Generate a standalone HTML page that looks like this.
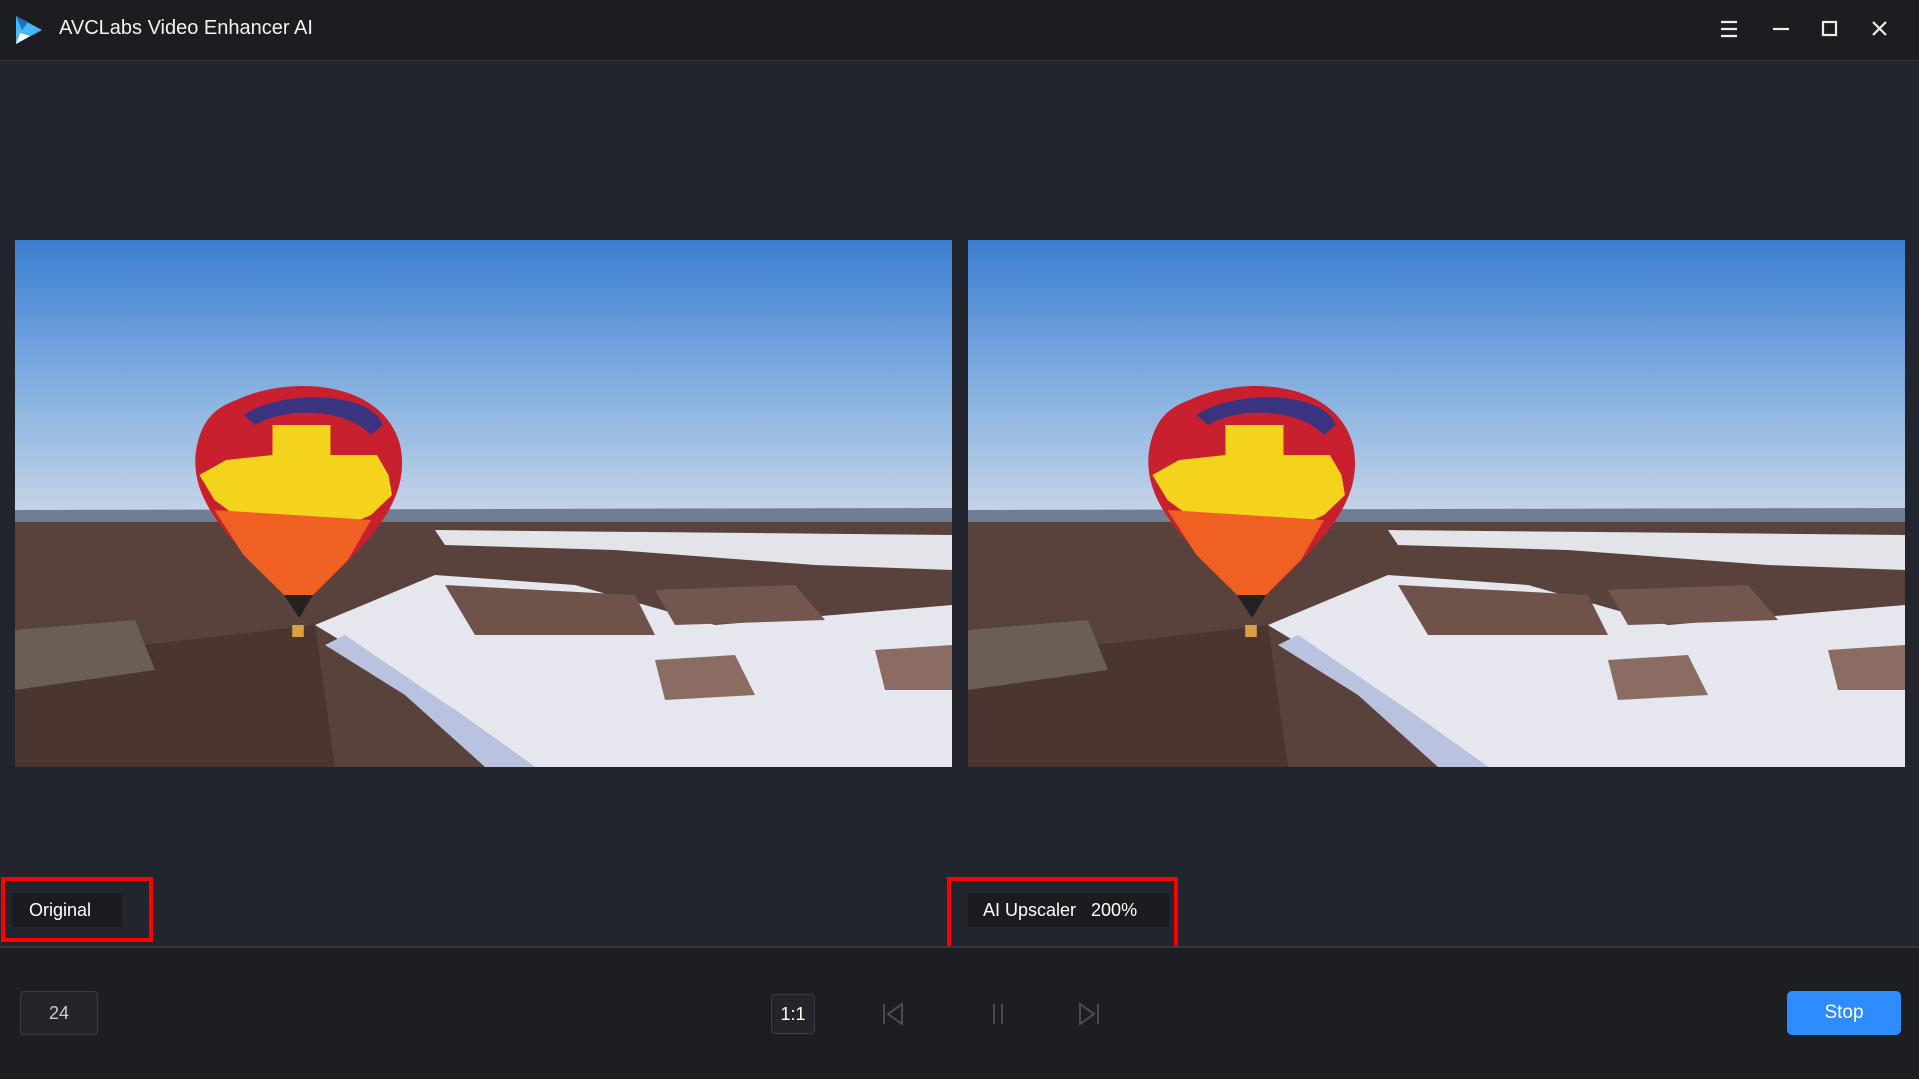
<!DOCTYPE html>
<html><head><meta charset="utf-8"><style>
*{margin:0;padding:0;box-sizing:border-box}
body{width:1919px;height:1079px;background:#22252d;font-family:"Liberation Sans",sans-serif;position:relative;overflow:hidden;color:#fff}
.title{position:absolute;left:0;top:0;width:1919px;height:61px;background:#1c1d20;border-bottom:1px solid #33363c}
.title span{position:absolute;left:59px;top:17px;font-size:20px;color:#f2f2f2}
.bottom{position:absolute;left:0;top:946px;width:1919px;height:133px;background:#1d1e22;border-top:2px solid #34373d}
.img{position:absolute;top:240px;width:937px;height:527px}
.lbl{position:absolute;top:893px;height:34px;background:#1b1c20;font-size:18px;line-height:34px;color:#fff}
.red{position:absolute;border:4px solid #f00}
.box{position:absolute;border:1px solid #3a3d44;border-radius:4px;background:#23252b;color:#ccc;font-size:18px;text-align:center;line-height:42px}
</style></head><body>
<div class="title">
<svg style="position:absolute;left:14px;top:14px" width="30" height="32" viewBox="0 0 30 32"><path d="M2 2 L28 16 L2 30 Z" fill="#45b8f5"/><path d="M2 2 L14 8 L8 16 Z" fill="#1f6fc4"/><path d="M2 30 L16 22 L6 19 Z" fill="#fff"/></svg>
<span>AVCLabs Video Enhancer AI</span>
<svg style="position:absolute;left:1718px;top:18px" width="180" height="22" viewBox="0 0 180 22" stroke="#eee" stroke-width="2.2" fill="none">
<path d="M3 4h16M3 11h16M3 18h16"/><path d="M55 11h16"/><rect x="105" y="4" width="13" height="13"/><path d="M155 4l13 13M168 4l-13 13"/></svg>
</div>
<svg class="img" style="left:15px" viewBox="0 0 937 527" preserveAspectRatio="none"><use href="#scene"/></svg>
<svg class="img" style="left:968px" viewBox="0 0 937 527" preserveAspectRatio="none">
<defs><g id="scene">
<linearGradient id="sky" x1="0" y1="0" x2="0" y2="1"><stop offset="0" stop-color="#3b7ed2"/><stop offset="0.6" stop-color="#8fb6e2"/><stop offset="1" stop-color="#c9d6e6"/></linearGradient>
<rect width="937" height="280" fill="url(#sky)"/>
<rect y="270" width="937" height="257" fill="#5a423c"/>
<path d="M0 270 L937 268 L937 282 L0 282Z" fill="#6f7d95"/>
<path d="M420 290 L937 295 L937 330 L800 325 L600 310 L430 305Z" fill="#e3e3ea"/>
<path d="M300 385 L420 335 L560 345 L700 385 L937 365 L937 527 L520 527 L440 470Z" fill="#e6e6ee"/>
<path d="M330 395 L440 470 L520 527 L470 527 L390 455 L310 405Z" fill="#b9c3e0"/>
<path d="M430 345 L620 355 L640 395 L460 395Z" fill="#6f534b"/>
<path d="M640 350 L780 345 L810 380 L660 385Z" fill="#73574f"/>
<path d="M640 420 L720 415 L740 455 L650 460Z" fill="#8a6c62"/>
<path d="M860 410 L937 405 L937 450 L870 450Z" fill="#8a6c62"/>
<path d="M0 420 L300 385 L320 527 L0 527Z" fill="#4a3530"/>
<path d="M0 390 L120 380 L140 430 L0 450Z" fill="#6a5e55"/>
<g transform="translate(283,0) scale(1.16,1) translate(-237,0)">
<path d="M184 160 C230 135 310 140 325 205 C335 260 300 300 250 355 L225 355 C180 300 140 260 150 205 C155 180 165 168 184 160Z" fill="#c8202f"/>
<path d="M190 175 C220 150 300 150 310 185 L300 195 C280 170 230 165 200 185Z" fill="#3a3480"/>
<path d="M215 185 L265 185 L265 215 L305 215 L315 235 L318 255 L300 275 L270 290 L200 290 L165 260 L152 235 L175 220 L215 215Z" fill="#f3d31c"/>
<path d="M165 270 L300 280 L280 320 L250 355 L225 355 L190 315Z" fill="#f06022"/>
<path d="M225 355 L250 355 L238 378Z" fill="#222"/>
<rect x="232" y="385" width="10" height="12" fill="#d9a040"/>
</g>
</g></defs><use href="#scene"/></svg>
<div class="lbl" style="left:12px;width:110px;padding-left:17px">Original</div>
<div class="red" style="left:1px;top:877px;width:152px;height:65px"></div>
<div class="lbl" style="left:968px;width:201px;padding-left:15px">AI Upscaler&nbsp;&nbsp;&nbsp;200%</div>
<div class="red" style="left:947px;top:877px;width:231px;height:75px"></div>
<div class="bottom"></div>
<div class="box" style="left:20px;top:991px;width:78px;height:44px">24</div>
<div class="box" style="left:771px;top:994px;width:44px;height:40px;line-height:38px;color:#fff">1:1</div>
<svg style="position:absolute;left:880px;top:1001px" width="230" height="26" viewBox="0 0 230 26" stroke="#4a4c52" stroke-width="2" fill="none">
<path d="M4 3v20M22 3 L8 13 L22 23Z"/><path d="M114 3v20M122 3v20"/><path d="M200 3 L214 13 L200 23Z M218 3v20"/></svg>
<div style="position:absolute;left:1787px;top:991px;width:114px;height:44px;background:#2f8cff;border-radius:5px;font-size:19px;text-align:center;line-height:44px">Stop</div>
</body></html>
